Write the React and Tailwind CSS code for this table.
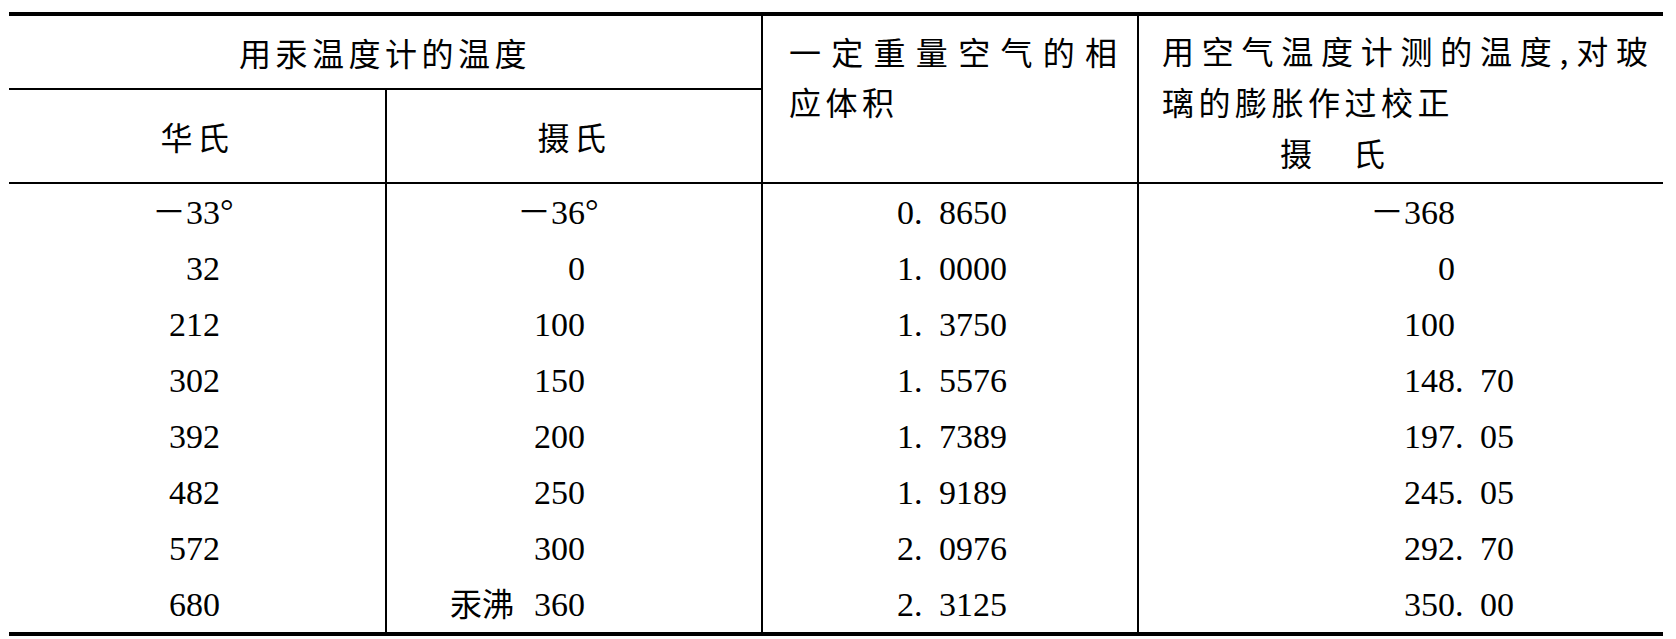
const cjk = { fontFamily: '"Noto Sans CJK SC", "Noto Sans", sans-serif' }
const num = { fontFamily: '"Liberation Serif", "Noto Sans CJK SC", serif' }

const rows = [
  ['－33', '－36', '0.8650', '－368', true],
  ['32', '0', '1.0000', '0'],
  ['212', '100', '1.3750', '100'],
  ['302', '150', '1.5576', '148.70'],
  ['392', '200', '1.7389', '197.05'],
  ['482', '250', '1.9189', '245.05'],
  ['572', '300', '2.0976', '292.70'],
  ['680', '360', '2.3125', '350.00', false, '汞沸'],
]

// integer part right-aligned in a fixed box, decimals hang to the right
function Num({ value, box, degree, note }) {
  const [int, frac] = value.split('.')
  return (
    <div className="flex items-baseline">
      <span className={`${box} shrink-0 text-right whitespace-nowrap`}>
        {note && <span className="text-[32px] mr-[20px]">{note}</span>}
        {int}
      </span>
      {frac && (
        <>
          <span className="inline-block w-[25px]">.</span>
          <span>{frac}</span>
        </>
      )}
      {degree && <span className="inline-block w-0 -translate-y-[2px]">°</span>}
    </div>
  )
}

function Spread({ text }) {
  return (
    <div className="flex justify-between">
      {text.split('').map((c, i) => (
        <span key={i}>{c}</span>
      ))}
    </div>
  )
}

export default function App() {
  return (
    <div className="bg-white w-[1676px] h-[639px] pt-[12px] pl-[9px] text-black">
      <div className="w-[1654px] border-t-4 border-b-4 border-black">
        {/* header */}
        <div
          className="grid grid-cols-[376px_376px_376px_526px] border-b-2 border-black text-[32px] tracking-[4.5px]"
          style={cjk}
        >
          <div className="col-span-2 flex flex-col">
            <div className="h-[74px] border-b-2 border-black flex items-center justify-center">
              用汞温度计的温度
            </div>
            <div className="grid grid-cols-[376px_376px] h-[92px]">
              <div className="flex items-center justify-center">华氏</div>
              <div className="border-l-2 border-black flex items-center justify-center">摄氏</div>
            </div>
          </div>
          <div className="border-l-2 border-black pt-[10px] pl-[26px] pr-[20px] leading-[50px] tracking-normal">
            <Spread text="一定重量空气的相" />
            <div className="tracking-[4.5px]">应体积</div>
          </div>
          <div className="border-l-2 border-black pt-[9px] pl-[23px] pr-[15px] leading-[51px] tracking-normal">
            <Spread text="用空气温度计测的温度,对玻" />
            <div className="tracking-[4.5px]">璃的膨胀作过校正</div>
            <div className="tracking-[4.5px] pl-[118px]">摄　氏</div>
          </div>
        </div>

        {/* data rows */}
        <div className="text-[34px]" style={num}>
          {rows.map((r, i) => (
            <div key={i} className="grid grid-cols-[376px_376px_376px_526px] h-[56px]">
              <div className="flex items-center">
                <Num value={r[0]} box="w-[211px]" degree={r[4]} />
              </div>
              <div className="border-l-2 border-black flex items-center">
                <Num value={r[1]} box="w-[198px]" degree={r[4]} note={r[5]} />
              </div>
              <div className="border-l-2 border-black flex items-center">
                <Num value={r[2]} box="w-[151px]" />
              </div>
              <div className="border-l-2 border-black flex items-center">
                <Num value={r[3]} box="w-[316px]" />
              </div>
            </div>
          ))}
        </div>
      </div>
    </div>
  )
}
